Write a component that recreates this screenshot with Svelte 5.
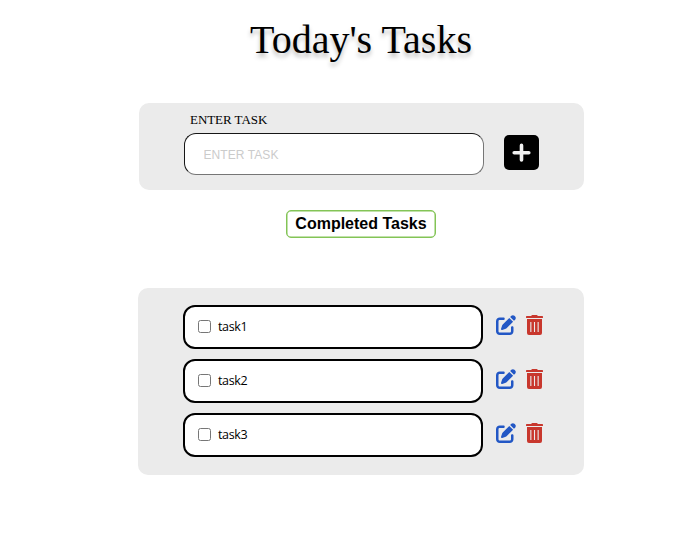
<script>
  let draft = $state('');
  let tasks = $state([
    { name: 'task1', done: false },
    { name: 'task2', done: false },
    { name: 'task3', done: false }
  ]);

  function addTask() {
    if (!draft.trim()) return;
    tasks.push({ name: draft.trim(), done: false });
    draft = '';
  }

  function editTask(task) {
    const name = prompt('Edit task', task.name);
    if (name) task.name = name;
  }
</script>

<main>
  <h1>Today's Tasks</h1>

  <section class="entry">
    <div class="field">
      <label for="task">ENTER TASK</label>
      <input id="task" type="text" placeholder="ENTER TASK" bind:value={draft} />
    </div>
    <button class="add" aria-label="Add task" onclick={addTask}>
      <svg viewBox="0 0 35 35"><path d="M17.5 10.4v14.600M10.2 17.700h14.600" /></svg>
    </button>
  </section>

  <button class="completed">Completed Tasks</button>

  <ul class="list">
    {#each tasks as task, i}
      <li>
        <label class="task"><input type="checkbox" bind:checked={task.done} /><span>{task.name}</span></label>
        <button class="icon edit" aria-label="Edit" onclick={() => editTask(task)}>
          <svg viewBox="0 0 512 512"><path d="M471.6 21.7c-21.9-21.9-57.3-21.9-79.2 0L362.3 51.7l97.9 97.9 30.1-30.1c21.9-21.9 21.9-57.3 0-79.2L471.6 21.7zm-299.2 220c-6.1 6.1-10.8 13.6-13.5 21.9l-29.6 88.8c-2.9 8.6-.6 18.1 5.8 24.6s15.9 8.7 24.6 5.8l88.8-29.6c8.2-2.7 15.7-7.4 21.9-13.5L437.7 172.3 339.7 74.3 172.4 241.7zM96 64C43 64 0 107 0 160V416c0 53 43 96 96 96H352c53 0 96-43 96-96V320c0-17.7-14.3-32-32-32s-32 14.3-32 32v96c0 17.7-14.3 32-32 32H96c-17.7 0-32-14.3-32-32V160c0-17.7 14.3-32 32-32h96c17.7 0 32-14.3 32-32s-14.3-32-32-32H96z" /></svg>
        </button>
        <button class="icon trash" aria-label="Delete" onclick={() => tasks.splice(i, 1)}>
          <svg viewBox="0 0 17 20"><path fill-rule="evenodd" d="M6.300 0h4.400q.5 0 .8.500l.4.600h4.400q.7 0 .7.700v.600q0 .600-.7.600H.7Q0 3 0 2.400v-.6q0-.7.7-.7h4.400l.4-.6q.3-.5.8-.5zM1 4.100h15v13.900q0 2-2 2H3q-2 0-2-2zM4.300 7v10h1.100V7zM7.950 7v10h1.100V7zM11.600 7v10h1.100V7z" /></svg>
        </button>
      </li>
    {/each}
  </ul>
</main>

<style>
  :global(body) {
    background: #fff;
  }

  main {
    display: flex;
    flex-direction: column;
    align-items: flex-start;
    width: 695px;
    height: 536px;
    box-sizing: border-box;
    padding: 16px 0 0 138px;
    color: #000;
  }

  h1 {
    width: 446px;
    margin: 0;
    text-align: center;
    font: 400 40px/48px 'Liberation Serif', serif;
    text-shadow: 0 4px 4px rgba(0, 0, 0, 0.25);
  }

  button {
    padding: 0;
    cursor: pointer;
  }

  .entry {
    display: flex;
    width: 445px;
    height: 87px;
    box-sizing: border-box;
    margin: 39px 0 0 1px;
    padding-left: 45px;
    border-radius: 10px;
    background: #ebebeb;
  }

  .field {
    display: flex;
    flex-direction: column;
    width: 300px;
    padding-top: 9px;
  }

  .field label {
    padding-left: 6px;
    font: 13px/15px 'Liberation Serif', serif;
    letter-spacing: -0.05px;
  }

  .field input {
    width: 300px;
    height: 42px;
    box-sizing: border-box;
    margin: 6px 0 0;
    padding: 1px 18.500px 0;
    border: 1px solid;
    border-color: #161616 #767676 #767676 #161616;
    border-radius: 12px;
    background: #fff;
    font: 12px 'Liberation Sans', sans-serif;
    letter-spacing: 0.08px;
    outline: none;
  }

  .field input::placeholder {
    color: #cbcbcb;
    opacity: 1;
  }

  .add {
    width: 35px;
    height: 35px;
    margin: 32px 0 0 20px;
    border: 0;
    border-radius: 5px;
    background: #000;
  }

  .add svg {
    display: block;
    width: 35px;
    height: 35px;
    fill: none;
    stroke: #f1f1f1;
    stroke-width: 3.600;
    stroke-linecap: round;
  }

  .completed {
    width: 150px;
    height: 28px;
    margin: 20px 0 0 148px;
    border: 1px solid #83c456;
    border-radius: 5px;
    background: #fff;
    box-shadow: inset 0 0 0 0.500px #83c456;
    color: #000;
    font: bold 16px/18px 'Liberation Sans', sans-serif;
  }

  .list {
    display: flex;
    flex-direction: column;
    gap: 10px;
    width: 446px;
    height: 187px;
    box-sizing: border-box;
    margin: 50px 0 0;
    padding: 17px 0 0 45px;
    border-radius: 10px;
    background: #ebebeb;
    list-style: none;
  }

  li {
    display: flex;
    height: 44px;
  }

  .task {
    display: flex;
    align-items: center;
    width: 300px;
    height: 44px;
    box-sizing: border-box;
    padding: 0 0 1px 13px;
    border: 2px solid #000;
    border-radius: 12px;
    background: #fff;
    font: 12.500px/18px 'Open Sans', sans-serif;
    letter-spacing: -0.35px;
  }

  .task input {
    width: 13px;
    height: 13px;
    margin: 0 7px 0 0;
  }

  .icon {
    display: block;
    height: 20px;
    margin-top: 10px;
    border: 0;
    background: none;
  }

  .icon svg {
    display: block;
    width: 100%;
    height: 20px;
    fill: currentColor;
  }

  .edit {
    width: 20px;
    margin-left: 13px;
    color: #2257c5;
  }

  .trash {
    width: 17px;
    margin-left: 10px;
    color: #c8372d;
  }
</style>
